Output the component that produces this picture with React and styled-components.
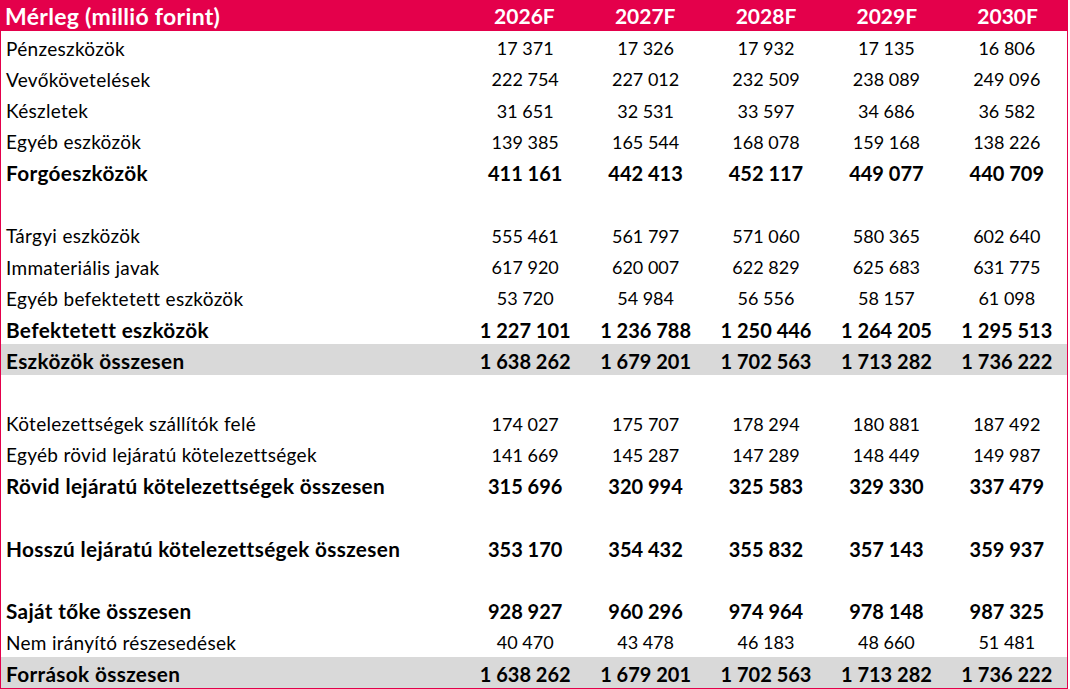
import styled, { createGlobalStyle } from "styled-components";

const GlobalStyle = createGlobalStyle`
  html, body {
    margin: 0;
    padding: 0;
    background: #fff;
  }
  body {
    font-family: Lato, "Open Sans", sans-serif;
    color: #000;
  }
`;

const PINK = "#e4004b";

const Tabla = styled.div`
  width: 1068px;
  height: 689px;
  box-sizing: border-box;
  border-left: 1px solid ${PINK};
  border-right: 1px solid ${PINK};
  border-bottom: 1px solid ${PINK};
  display: flex;
  flex-direction: column;
`;

const Sor = styled.div`
  display: grid;
  grid-template-columns: 464px repeat(5, 1fr);
  flex: 1;
  align-items: center;
  padding-top: 3px;
  box-sizing: border-box;
  background: ${(p) => (p.$szurke ? "#d9d9d9" : "transparent")};
  font-size: ${(p) => (p.$vastag ? "20px" : "18px")};
  font-weight: ${(p) => (p.$vastag ? 700 : 400)};
`;

const Fejlec = styled(Sor)`
  flex: 0 0 31px;
  padding-top: 0;
  background: ${PINK};
  color: #fff;
  font-size: 21px;
  font-weight: 700;
  margin: 0 -1px;
`;

const Cimke = styled.div`
  padding-left: 5px;
  white-space: nowrap;
  font-size: ${(p) => (p.$vastag ? "20.75px" : "19px")};
  letter-spacing: ${(p) => (p.$vastag ? "0.35px" : "0.3px")};
`;

const FejCimke = styled.div`
  padding-left: 5px;
  white-space: nowrap;
  font-size: 23px;
  letter-spacing: 0.3px;
`;

const Szam = styled.div`
  text-align: center;
  white-space: nowrap;
`;

const evek = ["2026F", "2027F", "2028F", "2029F", "2030F"];

const sorok = [
  { nev: "Pénzeszközök", ertek: ["17 371", "17 326", "17 932", "17 135", "16 806"] },
  { nev: "Vevőkövetelések", ertek: ["222 754", "227 012", "232 509", "238 089", "249 096"] },
  { nev: "Készletek", ertek: ["31 651", "32 531", "33 597", "34 686", "36 582"] },
  { nev: "Egyéb eszközök", ertek: ["139 385", "165 544", "168 078", "159 168", "138 226"] },
  { nev: "Forgóeszközök", ertek: ["411 161", "442 413", "452 117", "449 077", "440 709"], vastag: true },
  { ures: true },
  { nev: "Tárgyi eszközök", ertek: ["555 461", "561 797", "571 060", "580 365", "602 640"] },
  { nev: "Immateriális javak", ertek: ["617 920", "620 007", "622 829", "625 683", "631 775"] },
  { nev: "Egyéb befektetett eszközök", ertek: ["53 720", "54 984", "56 556", "58 157", "61 098"] },
  { nev: "Befektetett eszközök", ertek: ["1 227 101", "1 236 788", "1 250 446", "1 264 205", "1 295 513"], vastag: true },
  { nev: "Eszközök összesen", ertek: ["1 638 262", "1 679 201", "1 702 563", "1 713 282", "1 736 222"], vastag: true, szurke: true },
  { ures: true },
  { nev: "Kötelezettségek szállítók felé", ertek: ["174 027", "175 707", "178 294", "180 881", "187 492"] },
  { nev: "Egyéb rövid lejáratú kötelezettségek", ertek: ["141 669", "145 287", "147 289", "148 449", "149 987"] },
  { nev: "Rövid lejáratú kötelezettségek összesen", ertek: ["315 696", "320 994", "325 583", "329 330", "337 479"], vastag: true },
  { ures: true },
  { nev: "Hosszú lejáratú kötelezettségek összesen", ertek: ["353 170", "354 432", "355 832", "357 143", "359 937"], vastag: true },
  { ures: true },
  { nev: "Saját tőke összesen", ertek: ["928 927", "960 296", "974 964", "978 148", "987 325"], vastag: true },
  { nev: "Nem irányító részesedések", ertek: ["40 470", "43 478", "46 183", "48 660", "51 481"] },
  { nev: "Források összesen", ertek: ["1 638 262", "1 679 201", "1 702 563", "1 713 282", "1 736 222"], vastag: true, szurke: true },
];

export default function App() {
  return (
    <>
      <GlobalStyle />
      <Tabla>
        <Fejlec>
          <FejCimke>Mérleg (millió forint)</FejCimke>
          {evek.map((ev) => (
            <Szam key={ev}>{ev}</Szam>
          ))}
        </Fejlec>
        {sorok.map((sor, i) =>
          sor.ures ? (
            <Sor key={i} />
          ) : (
            <Sor key={i} $vastag={sor.vastag} $szurke={sor.szurke}>
              <Cimke $vastag={sor.vastag}>{sor.nev}</Cimke>
              {sor.ertek.map((e, j) => (
                <Szam key={j}>{e}</Szam>
              ))}
            </Sor>
          )
        )}
      </Tabla>
    </>
  );
}
